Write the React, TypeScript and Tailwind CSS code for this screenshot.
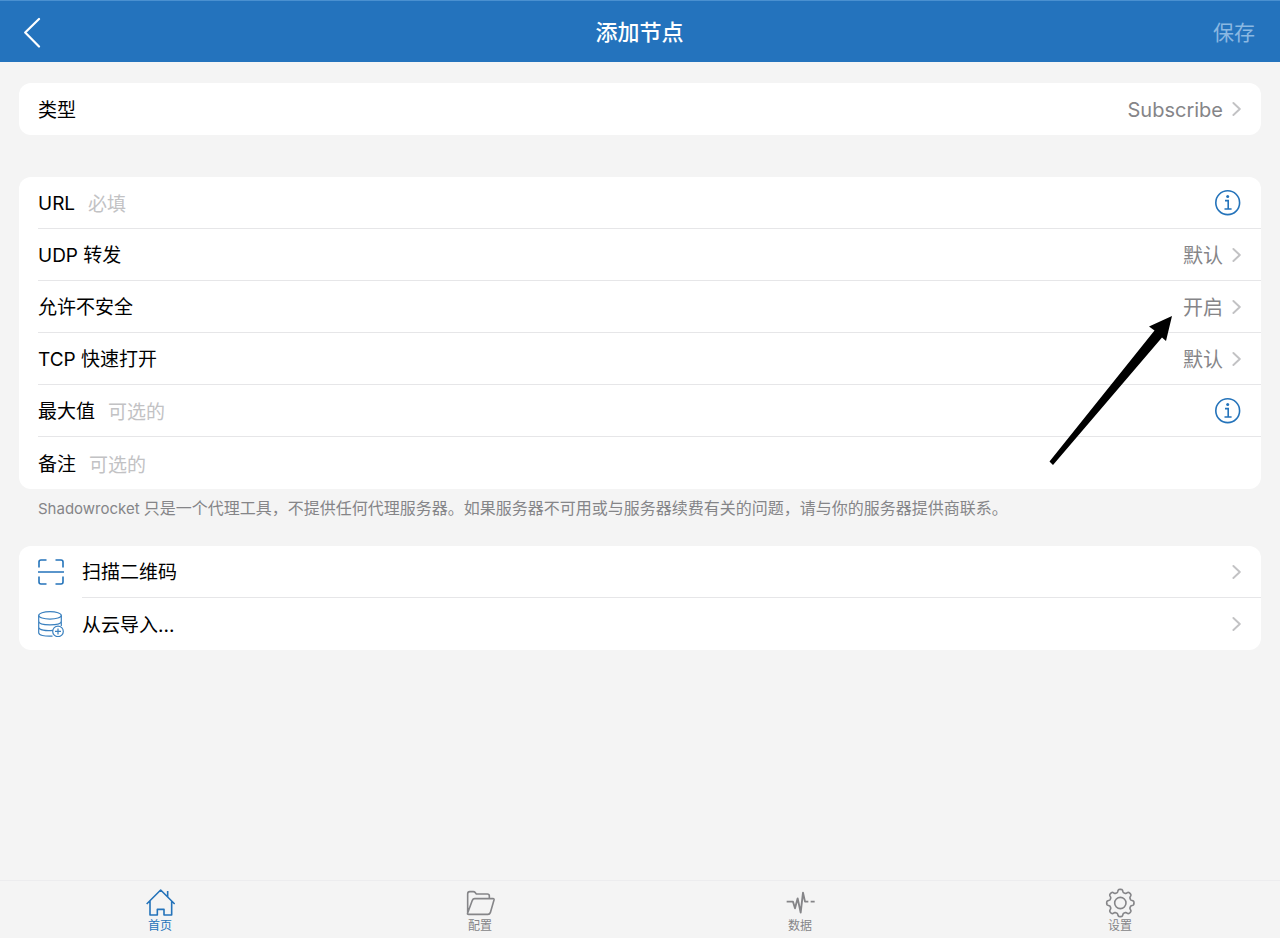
import type { ReactNode } from "react";

function Chevron() {
  return (
    <svg viewBox="0 0 10 16" className="h-4 w-[10px] shrink-0" fill="none" stroke="#c2c2c4" strokeWidth="1.9" strokeLinecap="round" strokeLinejoin="round" aria-hidden="true">
      <path d="M2.4 2 L8.8 8 L2.4 14" />
    </svg>
  );
}

function InfoIcon() {
  return (
    <svg viewBox="0 0 26 26" className="h-[26px] w-[26px]" fill="none" stroke="#2473ba" strokeWidth="1.6" aria-hidden="true">
      <circle cx="12.7" cy="12.7" r="11.9" />
      <path d="M10 10.6 H13.2 V19 M9.5 19 H16.6" />
      <circle cx="12.7" cy="6.6" r="1.5" fill="#2473ba" stroke="none" />
    </svg>
  );
}

function ScanIcon() {
  return (
    <svg viewBox="0 0 26 26" className="h-[26px] w-[26px]" fill="none" stroke="#2473ba" strokeWidth="1.6" aria-hidden="true">
      <path d="M1 8.5 V3 Q1 1 3 1 H8.5 M17.5 1 H23 Q25 1 25 3 V8.5 M25 17.5 V23 Q25 25 23 25 H17.5 M8.5 25 H3 Q1 25 1 23 V17.5 M0 13 H26" />
    </svg>
  );
}

function DatabaseIcon() {
  return (
    <svg viewBox="0 0 26 26" className="h-[26px] w-[26px]" fill="none" stroke="#3a80bf" strokeWidth="1.2" aria-hidden="true">
      <ellipse cx="12" cy="4.4" rx="11.3" ry="3.7" />
      <path d="M0.7 4.4 V21.8 C0.7 24 6 25.6 14.5 25.1 M23.3 4.4 V15 M0.7 10.2 C0.7 15 23.3 15 23.3 10.2 M0.7 16 C0.7 19 8 20.4 15 19.3" />
      <circle cx="20" cy="20.4" r="5.3" fill="#ffffff" />
      <path d="M20 17.4 V23.4 M17 20.4 H23" />
    </svg>
  );
}

function gearPath() {
  const steps = 240;
  const points: string[] = [];
  for (let i = 0; i < steps; i++) {
    const angle = (i / steps) * Math.PI * 2 - Math.PI / 2;
    const wave = Math.tanh(1.9 * (Math.cos(8 * angle) + 0.05));
    const radius = 36.5 + wave * 4.6;
    points.push(`${(46 + radius * Math.cos(angle)).toFixed(2)} ${(45 + radius * Math.sin(angle)).toFixed(2)}`);
  }
  return `M${points.join("L")}Z`;
}

function TabIcon({ children }: { children: ReactNode }) {
  return (
    <svg viewBox="0 0 90 90" className="h-[30px] w-[30px]" fill="none" stroke="currentColor" strokeWidth="4.8" strokeLinejoin="round" aria-hidden="true">
      {children}
    </svg>
  );
}

const tabs = [
  {
    label: "首页",
    active: true,
    icon: <path d="M5 48 L47 6 L89 48 M15 39 V81 H37 V64 H57 V81 H80 V39 M68 26 V9" />,
  },
  {
    label: "配置",
    active: false,
    icon: <path d="M8 75 V18 Q8 11 14 11 H25 Q28 11 31 14 L34 18 H67 Q73 18 73 24 V32 M8 75 L22 37 Q24 32 29 32 H84 Q88 32 87 36 L76 74 Q74 79 69 79 H11 Q6 79 8 75" />,
  },
  {
    label: "数据",
    active: false,
    icon: <path strokeWidth="5.6" d="M5 41 H24 L30 61 L38 31 L47 74 L54 14 L60 41 H70 M77 41 H89" />,
  },
  {
    label: "设置",
    active: false,
    icon: (
      <>
        <path d={gearPath()} />
        <circle cx="46" cy="45" r="17" />
      </>
    ),
  },
];

function ValueRow({ label, value, last }: { label: string; value: string; last?: boolean }) {
  return (
    <div className="pl-[19px]">
      <button type="button" className={`flex h-[52px] w-full items-center justify-between pr-5 text-left ${last ? "" : "border-b border-[#e6e6e8]"}`}>
        <span className="pt-1">{label}</span>
        <span className="flex items-center gap-2 text-xl text-[#858588]">
          <span className="pt-0.5">{value}</span>
          <Chevron />
        </span>
      </button>
    </div>
  );
}

function InputRow({ id, label, placeholder, info, last }: { id: string; label: string; placeholder: string; info?: boolean; last?: boolean }) {
  return (
    <div className="pl-[19px]">
      <div className={`flex h-[52px] items-center gap-[13px] pr-5 ${last ? "" : "border-b border-[#e6e6e8]"}`}>
        <label htmlFor={id} className="shrink-0 pt-1">{label}</label>
        <input id={id} type="text" placeholder={placeholder} className="h-full min-w-0 flex-1 bg-transparent pt-1 outline-none placeholder:text-[#c2c2c4]" />
        {info && (
          <button type="button" aria-label={`${label} 说明`} className="shrink-0">
            <InfoIcon />
          </button>
        )}
      </div>
    </div>
  );
}

function ActionRow({ icon, label, last }: { icon: ReactNode; label: string; last?: boolean }) {
  return (
    <button type="button" className="flex w-full items-center gap-[18px] pl-[19px] text-left">
      {icon}
      <span className={`flex h-[52px] flex-1 items-center justify-between pr-5 ${last ? "" : "border-b border-[#e6e6e8]"}`}>
        <span className="pt-1">{label}</span>
        <Chevron />
      </span>
    </button>
  );
}

function PointerArrow() {
  return (
    <svg viewBox="0 0 126 152" className="pointer-events-none absolute top-[137px] right-[87px] h-[152px] w-[126px]" aria-hidden="true">
      <path d="M124 2 L101 12.5 L106.5 16.5 L1.5 147.5 L5 151 L114 23.5 L118 27 Z" fill="#000000" />
    </svg>
  );
}

export default function App() {
  return (
    <div className="flex min-h-screen flex-col bg-[#f4f4f4] font-['Inter','Noto_Sans_CJK_SC',sans-serif] text-[19px] text-black">
      <header className="grid h-[62px] grid-cols-3 items-center border-t border-[#4a90d0] bg-[#2473bd] pt-0.5 pr-[25px] pl-6 text-white">
        <button type="button" aria-label="返回" className="justify-self-start">
          <svg viewBox="0 0 18 32" className="h-8 w-[18px]" fill="none" stroke="currentColor" strokeWidth="2.2" strokeLinecap="round" strokeLinejoin="round" aria-hidden="true">
            <path d="M15 2 L1.2 15.5 L15 29.5" />
          </svg>
        </button>
        <h1 className="justify-self-center text-[22px] font-medium">添加节点</h1>
        <button type="button" className="justify-self-end text-[21px] text-[#8bb8e2]">保存</button>
      </header>

      <main className="flex-1 px-[19px] pt-[21px]">
        <section className="rounded-xl bg-white">
          <ValueRow label="类型" value="Subscribe" last />
        </section>

        <section className="relative mt-[42px] rounded-xl bg-white">
          <InputRow id="url" label="URL" placeholder="必填" info />
          <ValueRow label="UDP 转发" value="默认" />
          <ValueRow label="允许不安全" value="开启" />
          <ValueRow label="TCP 快速打开" value="默认" />
          <InputRow id="max" label="最大值" placeholder="可选的" info />
          <InputRow id="remark" label="备注" placeholder="可选的" last />
          <PointerArrow />
        </section>

        <p className="px-[19px] pt-[7px] text-base leading-6 text-[#858588]">
          <span className="text-[15px]">Shadowrocket </span>
          只是一个代理工具，不提供任何代理服务器。如果服务器不可用或与服务器续费有关的问题，请与你的服务器提供商联系。
        </p>

        <section className="mt-[25px] rounded-xl bg-white">
          <ActionRow icon={<ScanIcon />} label="扫描二维码" />
          <ActionRow icon={<DatabaseIcon />} label="从云导入..." last />
        </section>
      </main>

      <nav className="grid h-[58px] grid-cols-4 border-t border-[#ececee]">
        {tabs.map((tab) => (
          <a
            key={tab.label}
            href="#"
            aria-current={tab.active ? "page" : undefined}
            className={`flex flex-col items-center pt-[7px] text-xs leading-4 ${tab.active ? "text-[#2473ba]" : "text-[#858588]"}`}
          >
            <TabIcon>{tab.icon}</TabIcon>
            {tab.label}
          </a>
        ))}
      </nav>
    </div>
  );
}
